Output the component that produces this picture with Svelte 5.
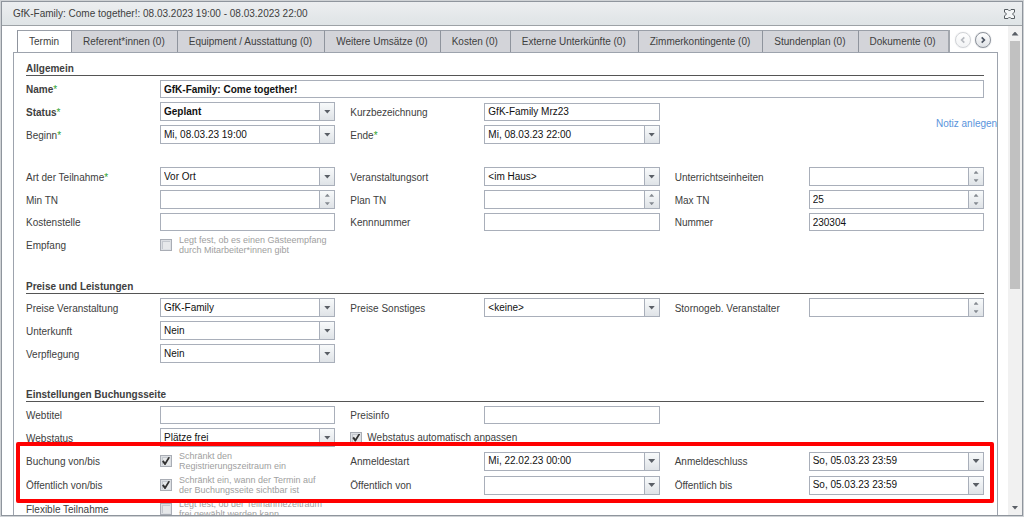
<script lang="ts">
	interface Field {
		id: string;
		label: string;
		type: 'text' | 'select' | 'date' | 'number' | 'check' | 'toggle';
		value?: string;
		required?: boolean;
		strong?: boolean;
		wide?: boolean;
		checked?: boolean;
		disabled?: boolean;
	}

	interface Group {
		boxed?: boolean;
		spaced?: boolean;
		rows: Field[][];
	}

	interface Section {
		title: string;
		groups: Group[];
	}

	const tabs = [
		'Termin',
		'Referent*innen (0)',
		'Equipment / Ausstattung (0)',
		'Weitere Umsätze (0)',
		'Kosten (0)',
		'Externe Unterkünfte (0)',
		'Zimmerkontingente (0)',
		'Stundenplan (0)',
		'Dokumente (0)'
	];

	const sections: Section[] = [
		{
			title: 'Allgemein',
			groups: [
				{
					rows: [
						[{ id: 'name', label: 'Name', type: 'text', value: 'GfK-Family: Come together!', required: true, strong: true, wide: true }],
						[
							{ id: 'status', label: 'Status', type: 'select', value: 'Geplant', required: true, strong: true },
							{ id: 'kurz', label: 'Kurzbezeichnung', type: 'text', value: 'GfK-Family Mrz23' }
						],
						[
							{ id: 'beginn', label: 'Beginn', type: 'date', value: 'Mi, 08.03.23 19:00', required: true },
							{ id: 'ende', label: 'Ende', type: 'date', value: 'Mi, 08.03.23 22:00', required: true }
						]
					]
				},
				{
					spaced: true,
					rows: [
						[
							{ id: 'art', label: 'Art der Teilnahme', type: 'select', value: 'Vor Ort', required: true },
							{ id: 'ort', label: 'Veranstaltungsort', type: 'select', value: '<im Haus>' },
							{ id: 'einheiten', label: 'Unterrichtseinheiten', type: 'number' }
						],
						[
							{ id: 'min', label: 'Min TN', type: 'number' },
							{ id: 'plan', label: 'Plan TN', type: 'number' },
							{ id: 'max', label: 'Max TN', type: 'number', value: '25' }
						],
						[
							{ id: 'kostenstelle', label: 'Kostenstelle', type: 'text' },
							{ id: 'kennnummer', label: 'Kennnummer', type: 'text' },
							{ id: 'nummer', label: 'Nummer', type: 'text', value: '230304' }
						],
						[{ id: 'empfang', label: 'Empfang', type: 'check', value: 'Legt fest, ob es einen Gästeempfang\ndurch Mitarbeiter*innen gibt', disabled: true }]
					]
				}
			]
		},
		{
			title: 'Preise und Leistungen',
			groups: [
				{
					rows: [
						[
							{ id: 'preise', label: 'Preise Veranstaltung', type: 'select', value: 'GfK-Family' },
							{ id: 'sonstiges', label: 'Preise Sonstiges', type: 'select', value: '<keine>' },
							{ id: 'storno', label: 'Stornogeb. Veranstalter', type: 'number' }
						],
						[{ id: 'unterkunft', label: 'Unterkunft', type: 'select', value: 'Nein' }],
						[{ id: 'verpflegung', label: 'Verpflegung', type: 'select', value: 'Nein' }]
					]
				}
			]
		},
		{
			title: 'Einstellungen Buchungsseite',
			groups: [
				{
					rows: [
						[
							{ id: 'webtitel', label: 'Webtitel', type: 'text' },
							{ id: 'preisinfo', label: 'Preisinfo', type: 'text' }
						],
						[
							{ id: 'webstatus', label: 'Webstatus', type: 'select', value: 'Plätze frei' },
							{ id: 'auto', label: 'Webstatus automatisch anpassen', type: 'toggle', checked: true }
						]
					]
				},
				{
					boxed: true,
					rows: [
						[
							{ id: 'buchung', label: 'Buchung von/bis', type: 'check', value: 'Schränkt den\nRegistrierungszeitraum ein', checked: true },
							{ id: 'start', label: 'Anmeldestart', type: 'date', value: 'Mi, 22.02.23 00:00' },
							{ id: 'schluss', label: 'Anmeldeschluss', type: 'date', value: 'So, 05.03.23 23:59' }
						],
						[
							{ id: 'oeffentlich', label: 'Öffentlich von/bis', type: 'check', value: 'Schränkt ein, wann der Termin auf\nder Buchungsseite sichtbar ist', checked: true },
							{ id: 'von', label: 'Öffentlich von', type: 'date' },
							{ id: 'bis', label: 'Öffentlich bis', type: 'date', value: 'So, 05.03.23 23:59' }
						]
					]
				},
				{
					rows: [
						[{ id: 'flexibel', label: 'Flexible Teilnahme', type: 'check', value: 'Legt fest, ob der Teilnahmezeitraum\nfrei gewählt werden kann', disabled: true }]
					]
				}
			]
		}
	];

	let activeTab = $state(0);
</script>

<div class="window">
	<header>
		<h1>GfK-Family: Come together!: 08.03.2023 19:00 - 08.03.2023 22:00</h1>
		<button class="close" aria-label="Schließen">
			<svg viewBox="0 0 11 10" width="11" height="10">
				<path d="M.5.5H4L5.500 2 7 .5h3.500V3l-2 2 2 2v2.500H7L5.500 8 4 9.500H.5V7l2-2-2-2z" fill="#f4f6f7" stroke="#565c61" />
			</svg>
		</button>
	</header>

	<div class="body">
		<div class="scroller">
			<nav>
				<div class="tabs" role="tablist">
					{#each tabs as tab, i}
						<button class="tab" class:active={activeTab === i} role="tab" aria-selected={activeTab === i} onclick={() => (activeTab = i)}>{tab}</button>
					{/each}
				</div>
				<div class="pager">
					<button disabled aria-label="Zurück">
						<svg viewBox="0 0 16 16"><path d="M9.500 5 6.500 8l3 3" /></svg>
					</button>
					<button aria-label="Weiter">
						<svg viewBox="0 0 16 16"><path d="M6.500 5l3 3-3 3" /></svg>
					</button>
				</div>
			</nav>

			<main>
				<a class="note" href="#notiz">Notiz anlegen</a>
				{#each sections as section}
					<section>
						<h2>{section.title}</h2>
						{#each section.groups as group}
							<div class="group" class:boxed={group.boxed} class:spaced={group.spaced}>
								{#each group.rows as row}
									<div class="row">
										{#each row as field}
											<div class="field" class:wide={field.wide} class:strong={field.strong}>
												{#if field.type === 'toggle'}
													<label class="toggle">
														<input type="checkbox" checked={field.checked} />
														{field.label}
													</label>
												{:else}
													<label class="caption" for={field.id}>{field.label}{#if field.required}<span class="star">*</span>{/if}</label>
													{#if field.type === 'check'}
														<div class="check">
															<input id={field.id} type="checkbox" checked={field.checked} disabled={field.disabled} />
															<label for={field.id}>{field.value}</label>
														</div>
													{:else if field.type === 'text'}
														<input class="text" id={field.id} type="text" value={field.value ?? ''} />
													{:else}
														<div class="combo">
															{#if field.type === 'select'}
																<select id={field.id}>
																	<option>{field.value}</option>
																</select>
																<span class="trigger"><i class="down"></i></span>
															{:else}
																<input id={field.id} type="text" value={field.value ?? ''} />
																{#if field.type === 'date'}
																	<button class="trigger" aria-label="Datum wählen"><i class="down"></i></button>
																{:else}
																	<div class="trigger spin">
																		<button aria-label="Mehr"><i class="up"></i></button>
																		<button aria-label="Weniger"><i class="down"></i></button>
																	</div>
																{/if}
															{/if}
														</div>
													{/if}
												{/if}
											</div>
										{/each}
									</div>
								{/each}
							</div>
						{/each}
					</section>
				{/each}
			</main>
		</div>

		<div class="scrollbar" aria-hidden="true">
			<span class="end"><i class="up"></i></span>
			<div class="track"><div class="thumb"></div></div>
			<span class="end"><i class="down"></i></span>
		</div>
	</div>
</div>

<style>
	:global(body) {
		background: #cfd2d5;
	}

	* {
		box-sizing: border-box;
	}

	.window {
		display: flex;
		flex-direction: column;
		height: 100vh;
		padding: 1px;
		background: #fff;
		border: 1px solid #cfd2d5;
		outline: 1px solid #8f959d;
		outline-offset: -2px;
		font-family: "Liberation Sans", Arial, sans-serif;
		font-size: 10px;
		line-height: 14px;
		color: #404040;
	}

	button,
	input,
	select {
		font: inherit;
		color: inherit;
		margin: 0;
		padding: 0;
		border: 0;
		border-radius: 0;
		background: none;
		outline: none;
	}

	header {
		display: flex;
		align-items: center;
		justify-content: space-between;
		flex: none;
		height: 24px;
		padding: 0 7px 0 11px;
		background: linear-gradient(#eceef0, #dfe4e6);
		border-bottom: 1px solid #9da2a6;
	}

	h1 {
		margin: 0;
		font-size: 10px;
		font-weight: normal;
	}

	.close {
		display: flex;
	}

	.body {
		display: flex;
		flex: 1;
		min-height: 0;
	}

	.scroller {
		flex: 1;
		min-width: 0;
		overflow-y: auto;
		scrollbar-width: none;
		padding: 4px 10px 0 11px;
	}

	/* tabs */
	nav {
		display: flex;
		justify-content: space-between;
		height: 22px;
		padding-left: 4px;
	}

	.tabs {
		display: flex;
		min-width: 0;
		overflow: hidden;
		border-right: 2px solid #a3a7ae;
	}

	.tab {
		flex: none;
		height: 22px;
		padding: 0 12px 0 11px;
		background: #d3d4d9;
		border-top: 1px solid #9a9fa8;
		border-left: 1px solid #8f949d;
		white-space: nowrap;
	}

	.tab.active {
		background: #fff;
	}

	.pager {
		display: flex;
		gap: 4px;
		padding: 2px 7px 0 0;
	}

	.pager button {
		display: flex;
		width: 16px;
		height: 16px;
		border: 1px solid #8c929b;
		border-radius: 50%;
		background: linear-gradient(#fff, #dfe2e6);
		box-shadow: 0 0 1px #8c929b;
	}

	.pager button:disabled {
		opacity: 0.4;
	}

	.pager svg {
		width: 14px;
		height: 14px;
		fill: none;
		stroke: #4d5563;
		stroke-width: 2;
	}

	/* form */
	main {
		position: relative;
		overflow: hidden;
		padding: 8px 13px 24px 12px;
		border: 1px solid #9da3ad;
		border-bottom: 0;
	}

	section + section {
		margin-top: 24px;
	}

	h2 {
		margin: 0 0 4px;
		padding-top: 2px;
		font-size: 10px;
		line-height: 12px;
		border-bottom: 1px solid #555;
	}

	.group {
		display: flex;
		flex-direction: column;
		gap: 4px;
	}

	.group + .group {
		margin-top: 4px;
	}

	.group.spaced {
		margin-top: 23px;
	}

	.boxed {
		position: relative;
	}

	.boxed::after {
		content: '';
		position: absolute;
		inset: -9px -10px -8px;
		border: 4px solid #f00;
		border-radius: 2px;
		pointer-events: none;
	}

	.row {
		display: grid;
		grid-template-columns: repeat(3, 1fr);
		column-gap: 15px;
	}

	.field {
		display: grid;
		grid-template-columns: 134px 1fr;
		align-items: center;
		min-width: 0;
	}

	.field.wide {
		grid-column: 1 / -1;
	}

	.caption {
		padding-top: 2px;
	}

	.strong {
		font-weight: bold;
	}

	.star {
		color: #2fa32f;
		font-weight: normal;
	}

	.text,
	.combo {
		width: 100%;
		min-width: 0;
		background: #fff;
		border: 1px solid #a9afba;
		color: #111;
	}

	.text {
		height: 18px;
		padding: 0 3px;
	}

	.combo {
		display: flex;
		height: 19px;
	}

	.combo > input,
	.combo > select {
		flex: 1;
		min-width: 0;
		padding: 0 3px;
		appearance: none;
	}

	.trigger {
		display: flex;
		align-items: center;
		justify-content: center;
		flex: none;
		width: 15px;
		border-left: 1px solid #a9afba;
		background: linear-gradient(#f8fafb, #dfe3e7);
	}

	span.trigger {
		pointer-events: none;
	}

	.spin {
		flex-direction: column;
	}

	.spin button {
		display: flex;
		flex: 1;
		align-items: center;
		justify-content: center;
		width: 100%;
	}

	.up,
	.down {
		width: 7px;
		height: 4px;
		background: #5a5f66;
		clip-path: polygon(0 0, 100% 0, 50% 100%);
	}

	.up {
		clip-path: polygon(0 100%, 100% 100%, 50% 0);
	}

	.spin .up,
	.spin .down {
		width: 5px;
		height: 3px;
		background: #858a91;
	}

	input[type='checkbox'] {
		display: flex;
		flex: none;
		align-items: center;
		justify-content: center;
		appearance: none;
		width: 12px;
		height: 12px;
		background: #e6e8ea;
		border: 1px solid #a9adb5;
		box-shadow: inset 0 0 0 1px #dcdfe3, inset 2px 2px 0 #c4c8ce;
	}

	input[type='checkbox']:checked::after {
		content: '';
		width: 8px;
		height: 8px;
		background: #333;
		clip-path: polygon(0 55%, 20% 42%, 38% 65%, 80% 0, 100% 6%, 44% 100%, 32% 100%);
	}

	.check {
		display: flex;
		align-items: center;
		gap: 7px;
		height: 20px;
	}

	.check label {
		font-size: 9px;
		line-height: 10px;
		color: #a0a0a0;
		white-space: pre-line;
	}

	.toggle {
		display: flex;
		grid-column: 1 / -1;
		align-items: center;
		gap: 5px;
	}

	/* hangs over the panel's right edge and is cut there */
	.note {
		position: absolute;
		top: 64px;
		left: calc(100% - 61px);
		color: #5a94dc;
		text-decoration: none;
		white-space: nowrap;
	}

	/* scrollbar */
	.scrollbar {
		display: flex;
		flex-direction: column;
		flex: none;
		width: 14px;
		background: #f1f1f1;
	}

	.end {
		display: flex;
		align-items: center;
		justify-content: center;
		height: 15px;
	}

	.track {
		flex: 1;
		padding: 0 2px;
	}

	.thumb {
		height: 54%;
		background: #c1c1c1;
	}
</style>
